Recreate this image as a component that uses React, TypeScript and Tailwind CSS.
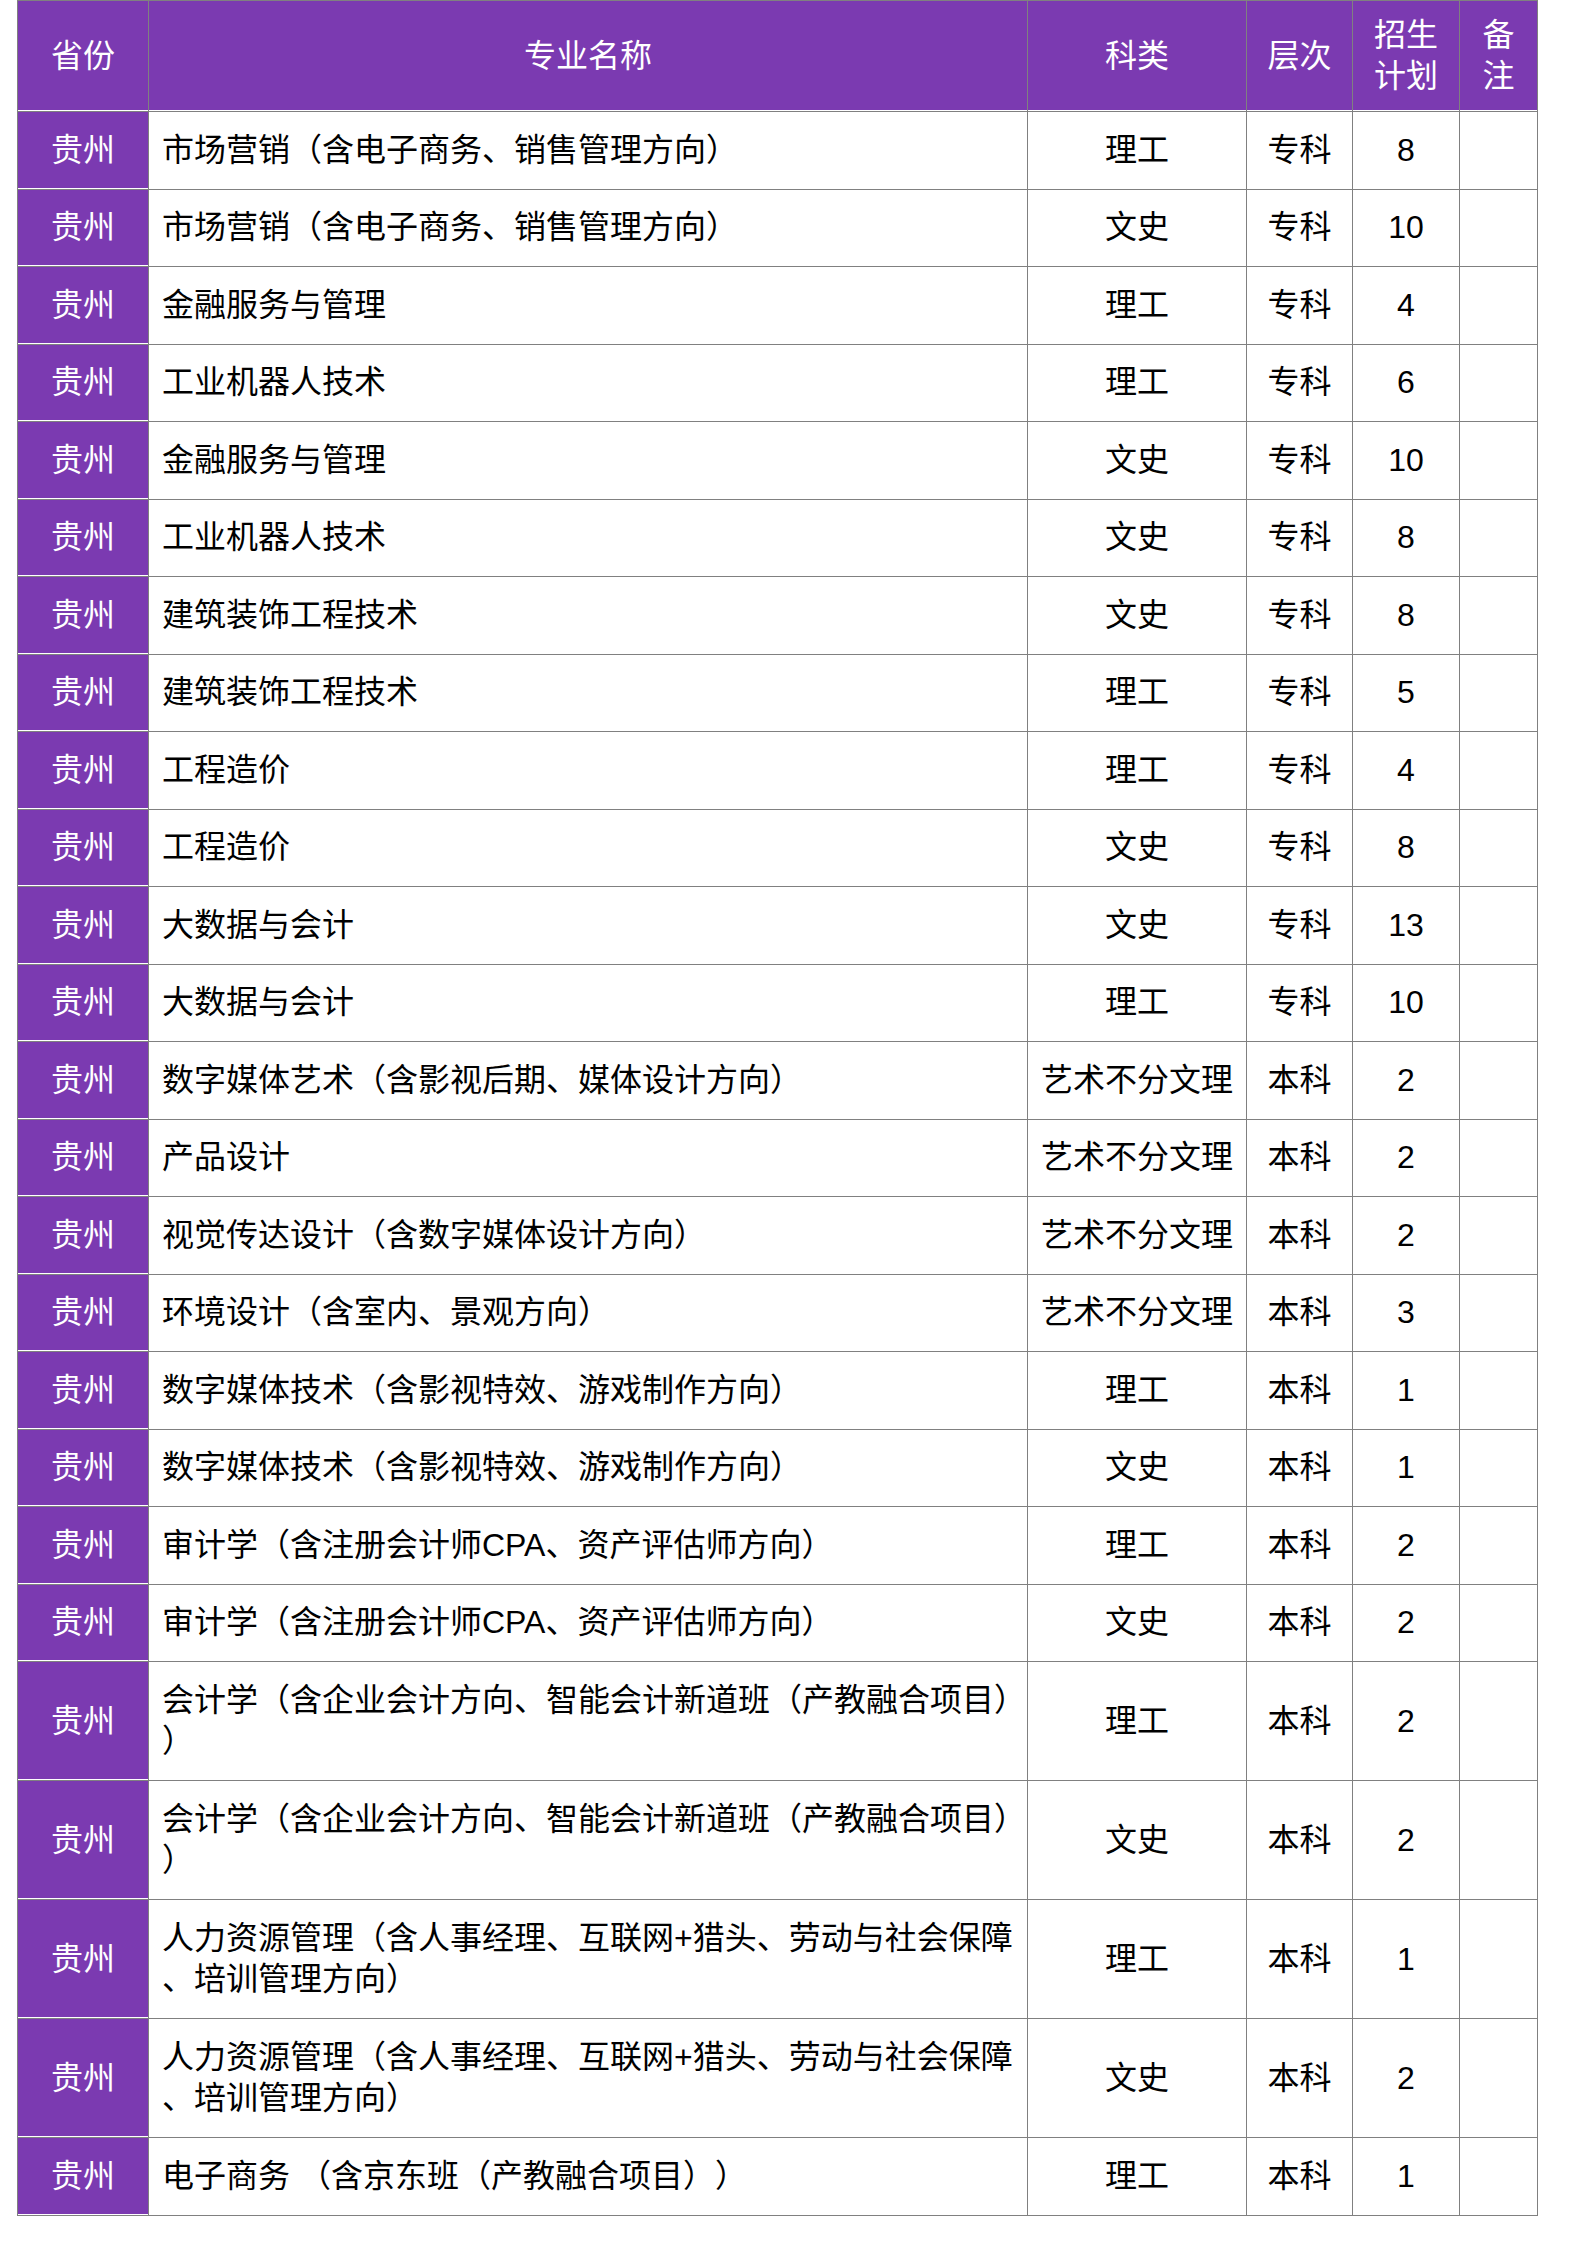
type Row = {
  name: string[];
  kind: string;
  level: string;
  plan: string;
};

const rows: Row[] = [
  { name: ['市场营销（含电子商务、销售管理方向）'], kind: '理工', level: '专科', plan: '8' },
  { name: ['市场营销（含电子商务、销售管理方向）'], kind: '文史', level: '专科', plan: '10' },
  { name: ['金融服务与管理'], kind: '理工', level: '专科', plan: '4' },
  { name: ['工业机器人技术'], kind: '理工', level: '专科', plan: '6' },
  { name: ['金融服务与管理'], kind: '文史', level: '专科', plan: '10' },
  { name: ['工业机器人技术'], kind: '文史', level: '专科', plan: '8' },
  { name: ['建筑装饰工程技术'], kind: '文史', level: '专科', plan: '8' },
  { name: ['建筑装饰工程技术'], kind: '理工', level: '专科', plan: '5' },
  { name: ['工程造价'], kind: '理工', level: '专科', plan: '4' },
  { name: ['工程造价'], kind: '文史', level: '专科', plan: '8' },
  { name: ['大数据与会计'], kind: '文史', level: '专科', plan: '13' },
  { name: ['大数据与会计'], kind: '理工', level: '专科', plan: '10' },
  { name: ['数字媒体艺术（含影视后期、媒体设计方向）'], kind: '艺术不分文理', level: '本科', plan: '2' },
  { name: ['产品设计'], kind: '艺术不分文理', level: '本科', plan: '2' },
  { name: ['视觉传达设计（含数字媒体设计方向）'], kind: '艺术不分文理', level: '本科', plan: '2' },
  { name: ['环境设计（含室内、景观方向）'], kind: '艺术不分文理', level: '本科', plan: '3' },
  { name: ['数字媒体技术（含影视特效、游戏制作方向）'], kind: '理工', level: '本科', plan: '1' },
  { name: ['数字媒体技术（含影视特效、游戏制作方向）'], kind: '文史', level: '本科', plan: '1' },
  { name: ['审计学（含注册会计师CPA、资产评估师方向）'], kind: '理工', level: '本科', plan: '2' },
  { name: ['审计学（含注册会计师CPA、资产评估师方向）'], kind: '文史', level: '本科', plan: '2' },
  { name: ['会计学（含企业会计方向、智能会计新道班（产教融合项目）', '）'], kind: '理工', level: '本科', plan: '2' },
  { name: ['会计学（含企业会计方向、智能会计新道班（产教融合项目）', '）'], kind: '文史', level: '本科', plan: '2' },
  { name: ['人力资源管理（含人事经理、互联网+猎头、劳动与社会保障', '、培训管理方向）'], kind: '理工', level: '本科', plan: '1' },
  { name: ['人力资源管理（含人事经理、互联网+猎头、劳动与社会保障', '、培训管理方向）'], kind: '文史', level: '本科', plan: '2' },
  { name: ['电子商务 （含京东班（产教融合项目））'], kind: '理工', level: '本科', plan: '1' },
];

export default function App() {
  const cell = 'border border-[#808080] align-middle';
  const purple = 'bg-[#7b3ab1] text-white shadow-[inset_0_-1px_0_#ffffff]';

  return (
    <div className="min-h-screen bg-white pl-[17px] font-['Liberation_Sans','Noto_Sans_CJK_SC',sans-serif] text-[32px] leading-[41px] text-black [text-spacing-trim:space-all]">
      <table className="w-[1521px] table-fixed border-collapse">
        <colgroup>
          <col className="w-[131px]" />
          <col className="w-[879px]" />
          <col className="w-[219px]" />
          <col className="w-[106px]" />
          <col className="w-[107px]" />
          <col className="w-[78px]" />
        </colgroup>
        <thead>
          <tr className="h-[111px]">
            <th className={`${cell} ${purple} text-center font-normal`}>省份</th>
            <th className={`${cell} ${purple} text-center font-normal`}>专业名称</th>
            <th className={`${cell} ${purple} text-center font-normal`}>科类</th>
            <th className={`${cell} ${purple} text-center font-normal`}>层次</th>
            <th className={`${cell} ${purple} text-center font-normal`}>
              招生
              <br />
              计划
            </th>
            <th className={`${cell} ${purple} text-center font-normal`}>
              备
              <br />
              注
            </th>
          </tr>
        </thead>
        <tbody>
          {rows.map((r, i) => (
            <tr key={i} className={r.name.length > 1 ? 'h-[119px]' : 'h-[77.5px]'}>
              <td className={`${cell} ${purple} text-center`}>贵州</td>
              <td className={`${cell} overflow-visible pl-[13px] text-left`}>
                {r.name.map((line, j) => (
                  <div key={j} className="whitespace-pre">
                    {line}
                  </div>
                ))}
              </td>
              <td className={`${cell} text-center`}>{r.kind}</td>
              <td className={`${cell} text-center`}>{r.level}</td>
              <td className={`${cell} text-center`}>{r.plan}</td>
              <td className={cell}></td>
            </tr>
          ))}
        </tbody>
      </table>
    </div>
  );
}
